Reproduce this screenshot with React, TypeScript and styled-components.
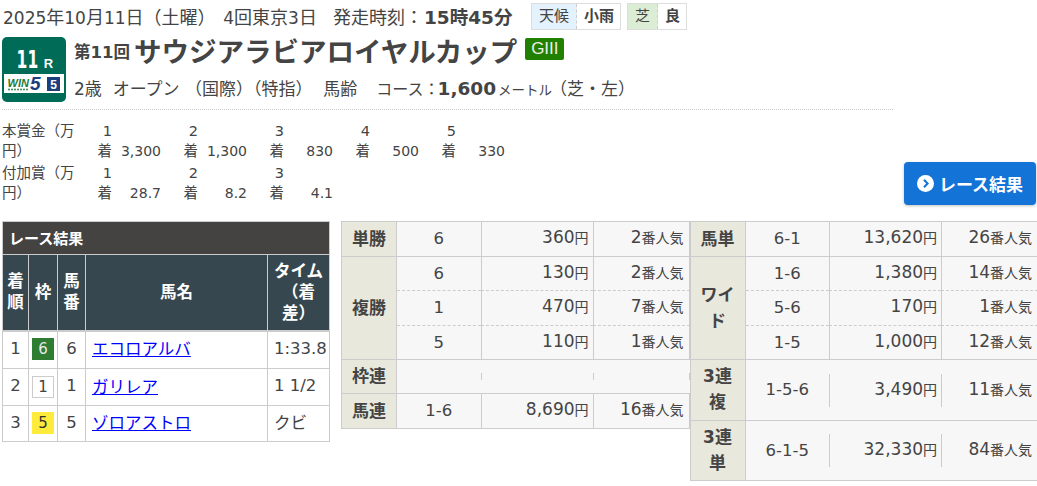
import React from 'react';
import styled, { createGlobalStyle } from 'styled-components';

const GlobalStyle = createGlobalStyle`
  html, body {
    margin: 0;
    padding: 0;
    background: #fff;
    color: #444;
    font-family: "DejaVu Sans", "Noto Sans CJK JP", sans-serif;
  }
  * { box-sizing: border-box; }
`;

type Payout = { combo: string; yen: string; rank: string; dashed?: boolean; tall?: boolean };
type Group = { label: string; rows: Payout[]; roomy?: boolean };

const leftGroups: Group[] = [
  { label: '単勝', rows: [{ combo: '6', yen: '360', rank: '2', tall: true }] },
  {
    label: '複勝',
    rows: [
      { combo: '6', yen: '130', rank: '2' },
      { combo: '1', yen: '470', rank: '7', dashed: true, tall: true },
      { combo: '5', yen: '110', rank: '1', dashed: true },
    ],
  },
  { label: '枠連', rows: [{ combo: '', yen: '', rank: '' }] },
  { label: '馬連', rows: [{ combo: '1-6', yen: '8,690', rank: '16', tall: true }] },
];

const rightGroups: Group[] = [
  { label: '馬単', rows: [{ combo: '6-1', yen: '13,620', rank: '26', tall: true }] },
  {
    label: 'ワイド',
    rows: [
      { combo: '1-6', yen: '1,380', rank: '14' },
      { combo: '5-6', yen: '170', rank: '1', dashed: true, tall: true },
      { combo: '1-5', yen: '1,000', rank: '12', dashed: true },
    ],
  },
  { label: '3連複', roomy: true, rows: [{ combo: '1-5-6', yen: '3,490', rank: '11' }] },
  { label: '3連単', rows: [{ combo: '6-1-5', yen: '32,330', rank: '84' }] },
];

const horses = [
  { pos: 1, waku: 6, num: 6, name: 'エコロアルバ', time: '1:33.8' },
  { pos: 2, waku: 1, num: 1, name: 'ガリレア', time: '1 1/2' },
  { pos: 3, waku: 5, num: 5, name: 'ゾロアストロ', time: 'クビ' },
];

const wakuColors: Record<number, { bg: string; fg: string; line: string }> = {
  1: { bg: '#fff', fg: '#444', line: '#ccc' },
  5: { bg: '#ffeb3b', fg: '#333', line: '#ffeb3b' },
  6: { bg: '#2e7d32', fg: '#e8e8e8', line: '#2e7d32' },
};

function PayoutTable({ groups }: { groups: Group[] }) {
  return (
    <PayTable>
      <colgroup>
        <col width={55} />
        <col width={84} />
        <col width={112} />
        <col width={97} />
      </colgroup>
      <tbody>
        {groups.map((g) =>
          g.rows.map((r, i) => (
            <tr key={g.label + i}>
              {i === 0 && (
                <PayHead rowSpan={g.rows.length} $roomy={g.roomy}>
                  {g.label}
                </PayHead>
              )}
              <PayCell $dashed={r.dashed} $tall={r.tall}>
                <ComboInner>{r.combo}</ComboInner>
              </PayCell>
              <PayCell $dashed={r.dashed} $tall={r.tall}>
                <ValueInner $empty={!r.yen} $tall={r.tall}>
                  {r.yen}
                  {r.yen && <Yen>円</Yen>}
                </ValueInner>
              </PayCell>
              <PayCell $dashed={r.dashed} $tall={r.tall}>
                <RankInner $empty={!r.rank} $tall={r.tall}>
                  {r.rank}
                  {r.rank && <Ninki>番人気</Ninki>}
                </RankInner>
              </PayCell>
            </tr>
          )),
        )}
      </tbody>
    </PayTable>
  );
}

export default function App(): JSX.Element {
  return (
    <Page>
      <GlobalStyle />
      <TopRow>
        <DateText>
          <Num>2025</Num>年<Num>10</Num>月<Num>11</Num>日（土曜）&nbsp;<Num>4</Num>回東京<Num>3</Num>日
        </DateText>
        <StartText>
          発走時刻：<strong>15時45分</strong>
        </StartText>
        <Chip>
          <ChipLabel $bg="#e3f2fd">天候</ChipLabel>
          <ChipValue>小雨</ChipValue>
        </Chip>
        <Chip>
          <ChipLabel $bg="#dcedd5">芝</ChipLabel>
          <ChipValue>良</ChipValue>
        </Chip>
      </TopRow>

      <TitleRow>
        <RaceBadge>
          <RaceNo>
            <RaceDigits>11</RaceDigits>
            <RaceSuffix>R</RaceSuffix>
          </RaceNo>
          <WinStrip>
            <svg width="60" height="19" viewBox="0 0 60 19">
              <text x="3.5" y="13" fontFamily="Liberation Sans" fontWeight="700" fontStyle="italic" fontSize="11" fill="#1f7a3c">
                WIN
              </text>
              <text x="26" y="16" fontFamily="Liberation Sans" fontWeight="700" fontStyle="italic" fontSize="19" fill="#1c3f7c">
                5
              </text>
              {[5, 8, 11, 14, 17, 20, 23].map((x) => (
                <circle key={x} cx={x} cy="15.5" r="0.9" fill="#1f7a3c" />
              ))}
              <rect x="43" y="3" width="13" height="14" fill="#1c3f7c" />
              <text x="49.5" y="14.5" textAnchor="middle" fontFamily="Liberation Sans" fontWeight="700" fontSize="12" fill="#fff">
                5
              </text>
            </svg>
          </WinStrip>
        </RaceBadge>
        <TitleBody>
          <TitleLine>
            <RaceOrdinal>第11回</RaceOrdinal>
            <RaceName>サウジアラビアロイヤルカップ</RaceName>
            <Grade>GIII</Grade>
          </TitleLine>
          <SubLine>
            <span>
              <Num>2</Num>歳&nbsp;&nbsp;オープン&nbsp;（国際）（特指）&nbsp;&nbsp;馬齢
            </span>
            <Course>
              コース：<strong>1,600</strong>
              <Meter>メートル</Meter>
              <CourseNote>（芝・左）</CourseNote>
            </Course>
          </SubLine>
        </TitleBody>
      </TitleRow>

      <PrizeRow>
        <PrizeTable>
          <colgroup>
            <col width={94} />
            {[1, 2, 3, 4, 5].map((n) => (
              <React.Fragment key={n}>
                <col width={16} />
                <col width={70} />
              </React.Fragment>
            ))}
          </colgroup>
          <tbody>
            <tr>
              <PrizeLabel>本賞金（万円）</PrizeLabel>
              {['3,300', '1,300', '830', '500', '330'].map((v, i) => (
                <React.Fragment key={i}>
                  <PrizeRank>{i + 1}着</PrizeRank>
                  <PrizeValue>{v}</PrizeValue>
                </React.Fragment>
              ))}
            </tr>
            <tr>
              <PrizeLabel>付加賞（万円）</PrizeLabel>
              {['28.7', '8.2', '4.1'].map((v, i) => (
                <React.Fragment key={i}>
                  <PrizeRank>{i + 1}着</PrizeRank>
                  <PrizeValue>{v}</PrizeValue>
                </React.Fragment>
              ))}
            </tr>
          </tbody>
        </PrizeTable>
        <ResultButton>
          <svg width="17" height="17" viewBox="0 0 17 17">
            <circle cx="8.5" cy="8.5" r="8.5" fill="#fff" />
            <path d="M7 4.8 L10.6 8.5 L7 12.2" fill="none" stroke="#1473d6" strokeWidth="2" />
          </svg>
          レース結果
        </ResultButton>
      </PrizeRow>

      <MainRow>
        <ResultTable>
          <colgroup>
            <col width={26} />
            <col width={29} />
            <col width={28} />
            <col width={182} />
            <col width={62} />
          </colgroup>
          <thead>
            <tr>
              <Caption colSpan={5}>レース結果</Caption>
            </tr>
            <tr>
              <ResultHead>着順</ResultHead>
              <ResultHead>枠</ResultHead>
              <ResultHead>馬番</ResultHead>
              <ResultHead>馬名</ResultHead>
              <ResultHead>タイム（着差）</ResultHead>
            </tr>
          </thead>
          <tbody>
            {horses.map((h) => (
              <tr key={h.pos}>
                <ResultCell>{h.pos}</ResultCell>
                <ResultCell>
                  <Waku $bg={wakuColors[h.waku].bg} $fg={wakuColors[h.waku].fg} $line={wakuColors[h.waku].line}>
                    {h.waku}
                  </Waku>
                </ResultCell>
                <ResultCell>{h.num}</ResultCell>
                <NameCell>
                  <HorseLink href="#">{h.name}</HorseLink>
                </NameCell>
                <TimeCell>{h.time}</TimeCell>
              </tr>
            ))}
          </tbody>
        </ResultTable>
        <PayoutArea>
          <PayoutTable groups={leftGroups} />
          <PayoutTable groups={rightGroups} />
        </PayoutArea>
      </MainRow>
    </Page>
  );
}

const Page = styled.div`
  width: 1037px;
  height: 486px;
  overflow: hidden;
  padding: 0 0 0 2px;
`;

const Num = styled.span`
  font-size: 17px;
`;

const TopRow = styled.div`
  display: flex;
  align-items: center;
  height: 30px;
  margin-top: 1px;
  font-size: 18px;
`;

const DateText = styled.div`
  margin-left: 1px;
  white-space: nowrap;
  width: 330px;
  word-spacing: 2px;
`;

const StartText = styled.div`
  white-space: nowrap;
  width: 198px;
  strong {
    font-weight: 700;
    font-size: 18.5px;
    margin-left: 1px;
  }
`;

const Chip = styled.div`
  display: flex;
  height: 27px;
  margin-right: 6px;
  border: 1px solid #ddd;
  font-size: 15px;
  line-height: 25px;
`;

const ChipLabel = styled.div<{ $bg: string }>`
  background: ${(p) => p.$bg};
  padding: 0 7px;
  border-right: 1px dashed #ccc;
`;

const ChipValue = styled.div`
  padding: 0 6px 0 7px;
  font-weight: 700;
`;

const TitleRow = styled.div`
  display: flex;
  margin-top: 6px;
  height: 73px;
  width: 891px;
  border-bottom: 1px dotted #ccc;
`;

const RaceBadge = styled.div`
  width: 64px;
  height: 65px;
  background: #006b57;
  border-radius: 5px;
  padding: 0 2px;
  color: #fff;
`;

const RaceNo = styled.div`
  display: flex;
  justify-content: center;
  align-items: baseline;
  height: 37px;
  padding: 8px 0 0 2px;
  line-height: 30px;
  font-weight: 700;
`;

const RaceDigits = styled.span`
  display: inline-block;
  font-size: 25px;
  margin: 0 -5px 0 -7px;
  transform: scaleX(0.62);
`;

const RaceSuffix = styled.span`
  font-family: "Liberation Sans", sans-serif;
  font-size: 13px;
  margin-left: 4px;
`;

const WinStrip = styled.div`
  background: #fff;
  height: 19px;
  svg {
    display: block;
  }
`;

const TitleBody = styled.div`
  margin-left: 8px;
`;

const TitleLine = styled.div`
  display: flex;
  align-items: center;
  height: 28px;
`;

const RaceOrdinal = styled.span`
  font-size: 16.5px;
  font-weight: 700;
  white-space: nowrap;
`;

const RaceName = styled.span`
  font-size: 27.5px;
  font-weight: 700;
  margin: -2px 0 0 4px;
  white-space: nowrap;
`;

const Grade = styled.span`
  background: #228000;
  color: #eee;
  border-radius: 2px;
  font-family: "Liberation Sans", sans-serif;
  font-size: 17px;
  width: 39px;
  height: 22px;
  line-height: 22px;
  text-align: center;
  margin: -4px 0 0 8px;
`;

const SubLine = styled.div`
  display: flex;
  align-items: center;
  margin-top: 9px;
  height: 26px;
  font-size: 17px;
  white-space: nowrap;
`;

const Course = styled.span`
  margin-left: 19px;
  font-size: 16px;
  strong {
    font-size: 18.5px;
    margin-left: -2px;
  }
`;

const Meter = styled.span`
  font-size: 13.5px;
  margin-left: 2px;
`;

const CourseNote = styled.span`
  font-size: 17px;
  margin-left: -2px;
`;

const PrizeRow = styled.div`
  display: flex;
  justify-content: space-between;
  align-items: flex-end;
  width: 1034px;
  height: 95px;
`;

const PrizeTable = styled.table`
  table-layout: fixed;
  width: 524px;
  margin-bottom: 2px;
  border-collapse: collapse;
  font-size: 14.5px;
  line-height: 20px;
`;

const PrizeLabel = styled.th`
  font-weight: 400;
  text-align: left;
  padding: 2px 14px 0 0;
`;

const PrizeRank = styled.th`
  font-weight: 400;
  text-align: right;
  padding: 2px 0 0;
`;

const PrizeValue = styled.td`
  text-align: right;
  padding: 22px 21px 0 0;
  vertical-align: top;
  font-size: 14px;
`;

const ResultButton = styled.a`
  display: flex;
  align-items: center;
  justify-content: center;
  gap: 5px;
  width: 132px;
  height: 43px;
  background: #1473d6;
  border-radius: 4px;
  color: #fff;
  font-size: 17px;
  font-weight: 700;
  box-shadow: 0 1px 3px rgba(0, 0, 0, 0.25);
`;

const MainRow = styled.div`
  display: flex;
  align-items: flex-start;
  margin-top: 16px;
`;

const ResultTable = styled.table`
  table-layout: fixed;
  width: 328px;
  border-collapse: collapse;
  font-size: 16.5px;
  flex: none;
`;

const Caption = styled.th`
  background: #454342;
  color: #fff;
  height: 33px;
  font-size: 15px;
  font-weight: 700;
  text-align: left;
  padding: 0 0 2px 6px;
  border: 1px solid #ccc;
`;

const ResultHead = styled.th`
  background: #37474f;
  color: #fff;
  height: 76px;
  padding: 0 2px;
  font-size: 16.5px;
  line-height: 21px;
  font-weight: 700;
  border: 1px solid #ccc;
  border-bottom: 2px solid #ccc;
`;

const ResultCell = styled.td`
  height: 38px;
  padding: 0 0 3px;
  text-align: center;
  border: 1px solid #ccc;
  tr:nth-child(2) > & {
    height: 37px;
  }
  tr:last-child > & {
    height: 36px;
  }
`;

const NameCell = styled(ResultCell)`
  text-align: left;
  padding-left: 6px;
`;

const TimeCell = styled(ResultCell)`
  text-align: left;
  padding-left: 6px;
  white-space: nowrap;
`;

const HorseLink = styled.a`
  color: #00f;
  text-decoration: underline;
`;

const Waku = styled.span<{ $bg: string; $fg: string; $line: string }>`
  display: block;
  width: 22px;
  height: 22px;
  margin: 2px auto 0;
  line-height: 20px;
  font-size: 15px;
  background: ${(p) => p.$bg};
  color: ${(p) => p.$fg};
  border: 1px solid ${(p) => p.$line};
`;

const PayoutArea = styled.div`
  display: flex;
  align-items: flex-start;
  margin-left: 11px;
`;

const PayTable = styled.table`
  table-layout: fixed;
  width: 348px;
  border-collapse: collapse;
  border: 1px solid #ccc;
  border-right: 0;
  flex: none;
`;

const PayHead = styled.th<{ $roomy?: boolean }>`
  background: #e8e8dc;
  padding: 3px 9px ${(p) => (p.$roomy ? '5px' : '4px')};
  font-size: 17px;
  line-height: 26px;
  font-weight: 700;
  border: 1px solid #ccc;
  color: #444;
`;

const PayCell = styled.td<{ $dashed?: boolean; $tall?: boolean }>`
  background: #f7f7f7;
  height: ${(p) => (p.$tall ? '35px' : '34px')};
  padding: 0;
  border-top: 1px ${(p) => (p.$dashed ? 'dashed' : 'solid')} #ccc;
`;

const ComboInner = styled.div`
  line-height: 26px;
  text-align: center;
  font-size: 16.5px;
  white-space: nowrap;
`;

const ValueInner = styled.div<{ $empty?: boolean; $tall?: boolean }>`
  height: ${(p) => (p.$empty ? '7px' : p.$tall ? '34px' : '33px')};
  border-left: 1px solid #ccc;
  padding-right: 4px;
  line-height: 31px;
  text-align: right;
  font-size: 17px;
  white-space: nowrap;
`;

const RankInner = styled(ValueInner)`
  border-right: 1px solid #ccc;
  padding-right: 5px;
`;

const Yen = styled.span`
  font-size: 14px;
`;

const Ninki = styled.span`
  font-size: 14px;
`;
